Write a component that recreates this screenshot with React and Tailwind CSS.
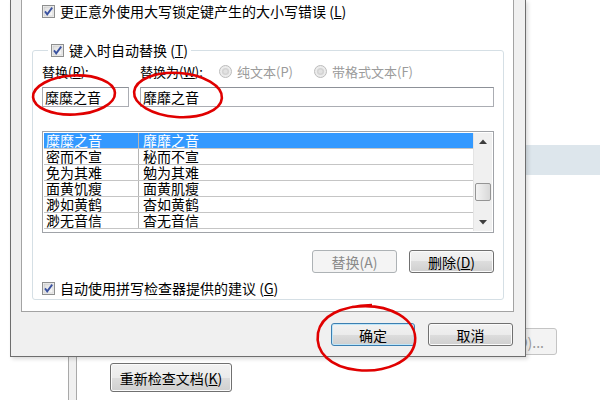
import React from 'react'

const rows = [
  ['糜糜之音', '靡靡之音'],
  ['密而不宣', '秘而不宣'],
  ['免为其难', '勉为其难'],
  ['面黄饥瘦', '面黄肌瘦'],
  ['渺如黄鹤', '杳如黄鹤'],
  ['渺无音信', '杳无音信'],
]

const Check = () => (
  <svg width="13" height="13" viewBox="0 0 13 13" className="shrink-0">
    <defs>
      <linearGradient id="cbg" x1="0" y1="0" x2="1" y2="1">
        <stop offset="0" stopColor="#dcdcdc" />
        <stop offset="1" stopColor="#fbfbfb" />
      </linearGradient>
    </defs>
    <rect x="0.5" y="0.5" width="12" height="12" fill="#f4f4f4" stroke="#8e8f8f" />
    <rect x="2" y="2" width="9" height="9" fill="url(#cbg)" stroke="#c3c3c3" strokeWidth="0.6" />
    <path d="M3 6.4 L5.2 9.4 L10.2 2.6" fill="none" stroke="#3a52a0" strokeWidth="1.8" />
  </svg>
)

const Radio = () => (
  <svg width="13" height="13" viewBox="0 0 13 13" className="shrink-0">
    <circle cx="6.5" cy="6.5" r="6" fill="#ececec" stroke="#bcbcbc" />
    <circle cx="6.5" cy="6.5" r="3.6" fill="#d4d4d4" />
    <circle cx="6.5" cy="6.5" r="2" fill="#e2e2e2" />
  </svg>
)

const Btn = ({ children, w, kind = 'normal' }) => {
  const base = 'flex items-center justify-center rounded-[3px] border text-[14px] leading-none h-[23px] '
  const look =
    kind === 'disabled'
      ? 'border-[#adb2b5] bg-[#f4f4f4] text-[#8a8a8a]'
      : kind === 'focused'
      ? 'border-[#3c7fb1] shadow-[inset_0_0_0_1px_#bfe6f9] bg-[linear-gradient(#f2f2f2_0%,#ebebeb_50%,#dddddd_50%,#cfcfcf_100%)] text-black'
      : 'border-[#707070] shadow-[inset_0_0_0_1px_#fbfbfb] bg-[linear-gradient(#f2f2f2_0%,#ebebeb_50%,#dddddd_50%,#cfcfcf_100%)] text-black'
  return <div className={base + look + ' ' + w}>{children}</div>
}

export default function App() {
  return (
    <div className="relative w-[600px] h-[400px] overflow-hidden bg-white text-black font-['Noto_Sans_CJK_SC','Noto_Sans',sans-serif]">
      {/* Background window */}
      <div className="flex h-full">
        <div className="w-[68px]" />
        <div className="w-[9px] border-x border-[#a9a9a9] bg-[#f0f0f0]" />
        <div className="flex-1 flex flex-col">
          <div className="mt-[145px] h-[30px] bg-[#dde6ec]" />
          <div className="mt-[153px] ml-[383px] w-[97px] h-[27px] rounded-[3px] border border-[#c4c4c4] bg-[#f3f3f3] flex items-center justify-end pr-[12px] text-[14px] text-[#9a9a9a] leading-none">
            选项(O)...
          </div>
          <div className="mt-[8px] ml-[33px] w-[122px] h-[29px] rounded-[3px] border border-[#707070] shadow-[inset_0_0_0_1px_#fbfbfb] bg-[linear-gradient(#f2f2f2_0%,#ebebeb_50%,#dddddd_50%,#cfcfcf_100%)] flex items-center justify-center text-[14px] leading-none">
            重新检查文档(<u>K</u>)
          </div>
        </div>
      </div>

      {/* Dialog window */}
      <div className="absolute left-[10px] top-0 w-[516px] h-[357px] border-x border-b border-[#6e6e6e] bg-[#f0f0f0] flex flex-col pl-[10px] pr-[11px] shadow-[2px_2px_4px_rgba(0,0,0,0.15)]">
        {/* Tab page */}
        <div className="h-[312px] bg-white border-x border-b border-[#a3a3a3] flex flex-col">
          <div className="h-[22px] pl-[20px] flex items-center gap-[5px] text-[14px] leading-none">
            <Check />
            <span>更正意外使用大写锁定键产生的大小写错误 (<u>L</u>)</span>
          </div>

          <fieldset className="mt-[20px] ml-[10px] mr-[9px] border border-[#d5dfe5] rounded-[3px] pl-[9px] pr-[9px] pb-[3px]">
            <legend className="ml-[6px] px-[3px] h-[16px] flex items-center gap-[5px] text-[14px] leading-none">
              <Check />
              <span>键入时自动替换 (<u>T</u>)</span>
            </legend>

            <div className="mt-[4px] h-[18px] flex items-center text-[13px] leading-none">
              <span className="w-[98px]">替换(<u>R</u>):</span>
              <span className="w-[79px]">替换为(<u>W</u>):</span>
              <span className="w-[95px] flex items-center gap-[5px] text-[#9b9b9b]">
                <Radio />
                纯文本(P)
              </span>
              <span className="flex items-center gap-[5px] text-[#9b9b9b]">
                <Radio />
                带格式文本(F)
              </span>
            </div>

            <div className="mt-[7px] flex h-[20px]">
              <div className="w-[87px] border border-[#abadb3] border-t-[#8d9198] flex items-center pl-[2px] text-[14px] leading-none">
                糜糜之音
              </div>
              <div className="ml-[11px] flex-1 border border-[#abadb3] border-t-[#8d9198] flex items-center pl-[2px] text-[14px] leading-none">
                靡靡之音
              </div>
            </div>

            <div className="mt-[24px] h-[102px] border border-[#a0a3a8] flex p-[1px] font-['Liberation_Sans','Noto_Sans_CJK_SC',sans-serif]">
              <div className="flex-1 flex flex-col">
                {rows.map(([a, b], i) => (
                  <div
                    key={a + i}
                    className={
                      i === 0
                        ? 'h-[16px] flex items-center bg-[#3399ff] text-white text-[14px] leading-[14px] border-b border-[#c5c5c5]'
                        : 'h-[16px] flex items-center text-[14px] leading-[14px] border-b border-[#c5c5c5]'
                    }
                  >
                    <div className="w-[95px] h-full flex items-center pl-[2px] border-r border-[#b5b5b5] whitespace-nowrap">{a}</div>
                    <div className="flex-1 pl-[4px] whitespace-nowrap">{b}</div>
                  </div>
                ))}
              </div>
              <div className="w-[19px] bg-[#f0f0f0] border-l border-[#e4e4e4] flex flex-col">
                <div className="h-[17px] flex items-center justify-center">
                  <svg width="8" height="5" viewBox="0 0 8 5">
                    <path d="M0 5 L4 0.5 L8 5 Z" fill="#3d3d3d" />
                  </svg>
                </div>
                <div className="h-[33px]" />
                <div className="mx-[1px] h-[18px] rounded-[2px] border border-[#959595] bg-[linear-gradient(90deg,#f3f3f3,#e6e6e6_50%,#d8d8d8)]" />
                <div className="flex-1" />
                <div className="h-[17px] flex items-center justify-center">
                  <svg width="8" height="5" viewBox="0 0 8 5">
                    <path d="M0 0 L8 0 L4 4.5 Z" fill="#3d3d3d" />
                  </svg>
                </div>
              </div>
            </div>

            <div className="mt-[17px] flex justify-end gap-[12px]">
              <Btn w="w-[85px]" kind="disabled">替换(A)</Btn>
              <Btn w="w-[85px]">删除(<u>D</u>)</Btn>
            </div>

            <div className="mt-[7px] h-[16px] flex items-center gap-[5px] text-[14px] leading-none">
              <Check />
              <span>自动使用拼写检查器提供的建议 (<u>G</u>)</span>
            </div>
          </fieldset>
        </div>

        <div className="mt-[11px] flex justify-end gap-[13px] pr-[1px]">
          <Btn w="w-[84px]" kind="focused">确定</Btn>
          <Btn w="w-[85px]">取消</Btn>
        </div>
      </div>

      {/* Red hand-drawn annotations */}
      <svg className="absolute inset-0 pointer-events-none" width="600" height="400" viewBox="0 0 600 400">
        <g fill="none" stroke="#e00000" strokeWidth="2.6">
          <ellipse cx="74" cy="95" rx="41" ry="19.5" transform="rotate(-3 74 95)" />
          <ellipse cx="178" cy="95" rx="44" ry="22" transform="rotate(4 178 95)" />
          <path d="M352 307 C 390 302, 418 320, 415 342 C 412 362, 385 373, 357 370 C 330 367, 315 352, 318 333 C 321 316, 340 306, 372 305" />
        </g>
      </svg>
    </div>
  )
}
